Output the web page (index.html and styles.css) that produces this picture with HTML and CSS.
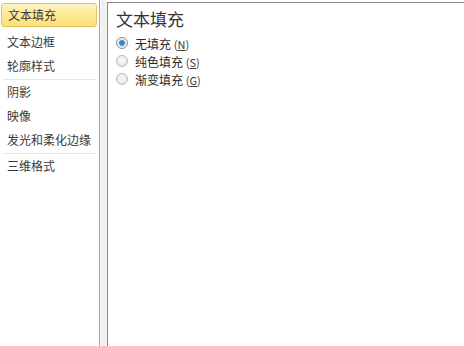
FILE: index.html
```html
<!DOCTYPE html>
<html lang="zh-CN">
<head>
<meta charset="utf-8">
<link rel="stylesheet" href="styles.css">
</head>
<body>
<div class="dialog">
  <nav class="nav">
    <div class="item selected">文本填充</div>
    <div class="item">文本边框</div>
    <div class="item">轮廓样式</div>
    <div class="sep"></div>
    <div class="item">阴影</div>
    <div class="item">映像</div>
    <div class="item">发光和柔化边缘</div>
    <div class="sep"></div>
    <div class="item">三维格式</div>
  </nav>
  <div class="splitter"></div>
  <main class="pane">
    <h1 class="title">文本填充</h1>
    <div class="options">
      <label class="opt"><span class="radio checked"></span><span class="lbl">无填充 <span class="key">(<u>N</u>)</span></span></label>
      <label class="opt"><span class="radio"></span><span class="lbl">纯色填充 <span class="key">(<u>S</u>)</span></span></label>
      <label class="opt"><span class="radio"></span><span class="lbl">渐变填充 <span class="key">(<u>G</u>)</span></span></label>
    </div>
  </main>
</div>
</body>
</html>
```

FILE: styles.css
```css
html, body {
  margin: 0;
  padding: 0;
  background: #ffffff;
}
body {
  font-family: "Noto Sans CJK SC", "Noto Sans", sans-serif;
  color: #333333;
}
.dialog {
  display: flex;
  height: 346px;
  width: 464px;
  overflow: hidden;
}
.nav {
  width: 99px;
  flex: none;
  border-right: 1px solid #a7a7a7;
  background: #ffffff;
  padding-top: 3px;
  box-sizing: content-box;
}
.item {
  height: 24px;
  line-height: 24px;
  font-size: 12px;
  padding-left: 7px;
  white-space: nowrap;
  color: #3a3a3a;
}
.item.selected {
  margin: 0 2px 3px 1px;
  height: 22px;
  line-height: 22px;
  padding-left: 6px;
  border: 1px solid #e2c263;
  border-radius: 3px;
  background: linear-gradient(#fdf3c6, #fde98f 55%, #fcdf7a);
}
.sep {
  height: 1px;
  margin: 1px 3px 0 3px;
  background: #e6e6e6;
}
.splitter {
  width: 7px;
  flex: none;
  background: linear-gradient(to right, #f6f6f6, #eeeeee 50%, #f4f4f4);
}
.pane {
  flex: 1;
  margin-top: 2px;
  border-left: 1px solid #8c8c8c;
  border-top: 1px solid #8c8c8c;
  background: #ffffff;
  padding: 6px 0 0 8px;
}
.title {
  margin: 0;
  font-size: 17px;
  font-weight: normal;
  line-height: 20px;
  color: #333;
}
.options {
  margin-top: 5px;
  display: flex;
  flex-direction: column;
}
.opt {
  display: flex;
  align-items: center;
  height: 18px;
}
.radio {
  width: 10px;
  height: 10px;
  border-radius: 50%;
  border: 1px solid #b9b9b9;
  background: radial-gradient(circle at 50% 40%, #f9f9f9, #e2e2e2);
  margin-right: 7px;
  box-sizing: content-box;
}
.radio.checked {
  border-color: #8a8f97;
  background: radial-gradient(circle, #2f78b8 0, #4a8fd0 2.5px, #dfe6ee 3.5px, #f2f4f6 5px);
}
.lbl {
  font-size: 12px;
  color: #2a2a2a;
  white-space: nowrap;
}
.key {
  font-size: 11px;
  color: #3a3a3a;
}
```
